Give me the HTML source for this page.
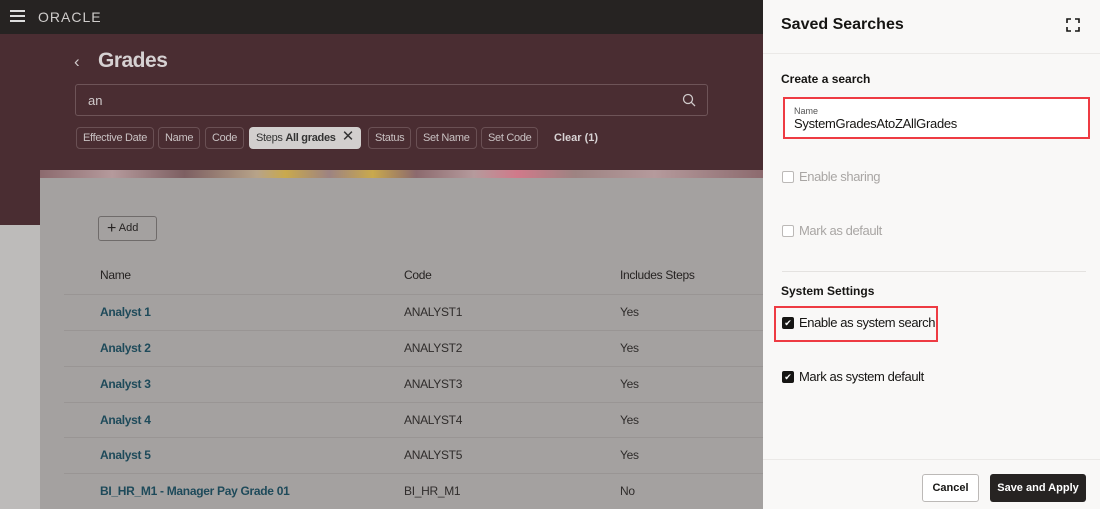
<!DOCTYPE html>
<html><head><style>
*{margin:0;padding:0;box-sizing:border-box}
body{width:1100px;height:509px;overflow:hidden;position:relative;font-family:"Liberation Sans",sans-serif;background:#a4a1a0}
.a{position:absolute}
.top{left:0;top:0;width:763px;height:34px;background:#262322}
.band{left:0;top:34px;width:763px;height:191px;background:#4a2d32}
.left{left:0;top:225px;width:40px;height:284px;background:#bdbbba}
.card{left:40px;top:170px;width:723px;height:339px;background:#a4a1a0}
.pat{left:40px;top:170px;width:723px;height:8px;background:linear-gradient(90deg,#8c6a6e,#b59a9c 10%,#7d5f62 20%,#b7a389 30%,#c9a94d 34%,#9d8382 40%,#c9a94d 46%,#8c6a6e 52%,#b59a9c 60%,#d07a8a 66%,#9d8382 74%,#b59a9c 85%,#8c6a6e)}
.chip{top:127px;height:22px;border:1px solid #6a5054;border-radius:4px;color:#c9c2c3;font-size:11px;line-height:20px;padding:0 6px;letter-spacing:-.3px}
.th{top:268px;font-size:12px;color:#262322;letter-spacing:-.3px}
.td{font-size:12px;color:#2f2c2b;letter-spacing:-.3px}
.lk{color:#1e4a5a;font-weight:bold}
.line{left:64px;width:699px;height:1px;background:#999594}
.panel{left:763px;top:0;width:337px;height:509px;background:#f9f8f7}
.pt{font-size:16px;font-weight:bold;color:#161513}
.cb{width:12px;height:12px;border:1px solid #bcb9b7;border-radius:2px;background:#fff}
.cbk{width:12px;height:12px;border-radius:2px;background:#161513;color:#fff;font-size:9px;line-height:12px;text-align:center}
.lbl{font-size:13px;color:#161513;letter-spacing:-.4px}
</style></head><body>
<div class="a top"></div>
<div class="a" style="left:10px;top:10px;width:15px;height:2px;background:#ddd;box-shadow:0 5px 0 #ddd,0 10px 0 #ddd"></div>
<div class="a" style="left:38px;top:9px;font-size:14px;color:#cfcccb;letter-spacing:1px">ORACLE</div>
<div class="a band"></div>
<div class="a left"></div>
<div class="a card"></div>
<div class="a pat"></div>
<div class="a" style="left:74px;top:52px;font-size:17px;color:#cfc9ca">&#8249;</div>
<div class="a" style="left:98px;top:49px;font-size:21px;font-weight:bold;color:#d6d1d2;letter-spacing:-.5px">Grades</div>
<div class="a" style="left:75px;top:84px;width:633px;height:32px;border:1px solid #6e5458;border-radius:3px"></div>
<div class="a" style="left:88px;top:93px;font-size:13px;color:#cfc9ca">an</div>
<svg class="a" style="left:682px;top:93px" width="14" height="14" viewBox="0 0 14 14"><circle cx="6" cy="6" r="4.5" stroke="#cfc9ca" stroke-width="1.3" fill="none"/><path d="M9.3 9.3L13 13" stroke="#cfc9ca" stroke-width="1.3"/></svg>
<div class="a chip" style="left:76px">Effective Date</div>
<div class="a chip" style="left:158px">Name</div>
<div class="a chip" style="left:205px">Code</div>
<div class="a chip" style="left:249px;width:112px;background:#d2cfce;border-color:#d2cfce;color:#333">Steps <b>All grades</b> <span style="position:absolute;right:6px;top:-1px;font-size:15px">✕</span></div>
<div class="a chip" style="left:368px">Status</div>
<div class="a chip" style="left:416px">Set Name</div>
<div class="a chip" style="left:481px">Set Code</div>
<div class="a" style="left:554px;top:132px;font-size:11px;font-weight:bold;color:#d8d3d4">Clear (1)</div>
<div class="a" style="left:98px;top:216px;width:59px;height:25px;border:1px solid #6f6b6a;border-radius:3px;font-size:11px;line-height:23px;padding-left:8px;color:#262322"><span style="font-size:16px;vertical-align:-2px">+</span> Add</div>
<div class="a th" style="left:100px">Name</div>
<div class="a th" style="left:404px">Code</div>
<div class="a th" style="left:620px">Includes Steps</div>
<div class="a line" style="top:294px"></div>
<div class="a line" style="top:330px"></div>
<div class="a line" style="top:366px"></div>
<div class="a line" style="top:402px"></div>
<div class="a line" style="top:437px"></div>
<div class="a line" style="top:473px"></div>
<div class="a td lk" style="left:100px;top:305px">Analyst 1</div><div class="a td" style="left:404px;top:305px">ANALYST1</div><div class="a td" style="left:620px;top:305px">Yes</div>
<div class="a td lk" style="left:100px;top:341px">Analyst 2</div><div class="a td" style="left:404px;top:341px">ANALYST2</div><div class="a td" style="left:620px;top:341px">Yes</div>
<div class="a td lk" style="left:100px;top:377px">Analyst 3</div><div class="a td" style="left:404px;top:377px">ANALYST3</div><div class="a td" style="left:620px;top:377px">Yes</div>
<div class="a td lk" style="left:100px;top:413px">Analyst 4</div><div class="a td" style="left:404px;top:413px">ANALYST4</div><div class="a td" style="left:620px;top:413px">Yes</div>
<div class="a td lk" style="left:100px;top:448px">Analyst 5</div><div class="a td" style="left:404px;top:448px">ANALYST5</div><div class="a td" style="left:620px;top:448px">Yes</div>
<div class="a td lk" style="left:100px;top:484px">BI_HR_M1 - Manager Pay Grade 01</div><div class="a td" style="left:404px;top:484px">BI_HR_M1</div><div class="a td" style="left:620px;top:484px">No</div>

<div class="a panel"></div>
<div class="a pt" style="left:781px;top:16px">Saved Searches</div>
<svg class="a" style="left:1066px;top:18px" width="14" height="14" viewBox="0 0 14 14" fill="none" stroke="#161513" stroke-width="1.6"><path d="M1 5V1h4M9 1h4v4M13 9v4H9M5 13H1V9"/></svg>
<div class="a" style="left:763px;top:53px;width:337px;height:1px;background:#ebe9e7"></div>
<div class="a" style="left:781px;top:72px;font-size:12px;font-weight:bold;color:#161513">Create a search</div>
<div class="a" style="left:783px;top:97px;width:307px;height:42px;border:2px solid #ee3b43;background:#fff"></div>
<div class="a" style="left:794px;top:106px;font-size:9px;color:#555">Name</div>
<div class="a" style="left:794px;top:116px;font-size:13px;color:#161513;letter-spacing:-.3px">SystemGradesAtoZAllGrades</div>
<div class="a cb" style="left:782px;top:171px"></div><div class="a lbl" style="left:799px;top:169px;color:#a9a6a4">Enable sharing</div>
<div class="a cb" style="left:782px;top:225px"></div><div class="a lbl" style="left:799px;top:223px;color:#a9a6a4">Mark as default</div>
<div class="a" style="left:782px;top:271px;width:304px;height:1px;background:#e4e2e0"></div>
<div class="a" style="left:781px;top:284px;font-size:12px;font-weight:bold;color:#161513">System Settings</div>
<div class="a" style="left:774px;top:306px;width:164px;height:36px;border:2px solid #ee3b43"></div>
<div class="a cbk" style="left:782px;top:317px">✔</div><div class="a lbl" style="left:799px;top:315px">Enable as system search</div>
<div class="a cbk" style="left:782px;top:371px">✔</div><div class="a lbl" style="left:799px;top:369px">Mark as system default</div>
<div class="a" style="left:763px;top:459px;width:337px;height:1px;background:#ebe9e7"></div>
<div class="a" style="left:922px;top:474px;width:57px;height:28px;border:1px solid #bcb9b7;border-radius:3px;background:#fff;font-size:11px;font-weight:bold;line-height:26px;text-align:center;color:#161513">Cancel</div>
<div class="a" style="left:990px;top:474px;width:96px;height:28px;border-radius:3px;background:#262322;font-size:11px;font-weight:bold;line-height:28px;text-align:center;color:#fff">Save and Apply</div>
</body></html>
